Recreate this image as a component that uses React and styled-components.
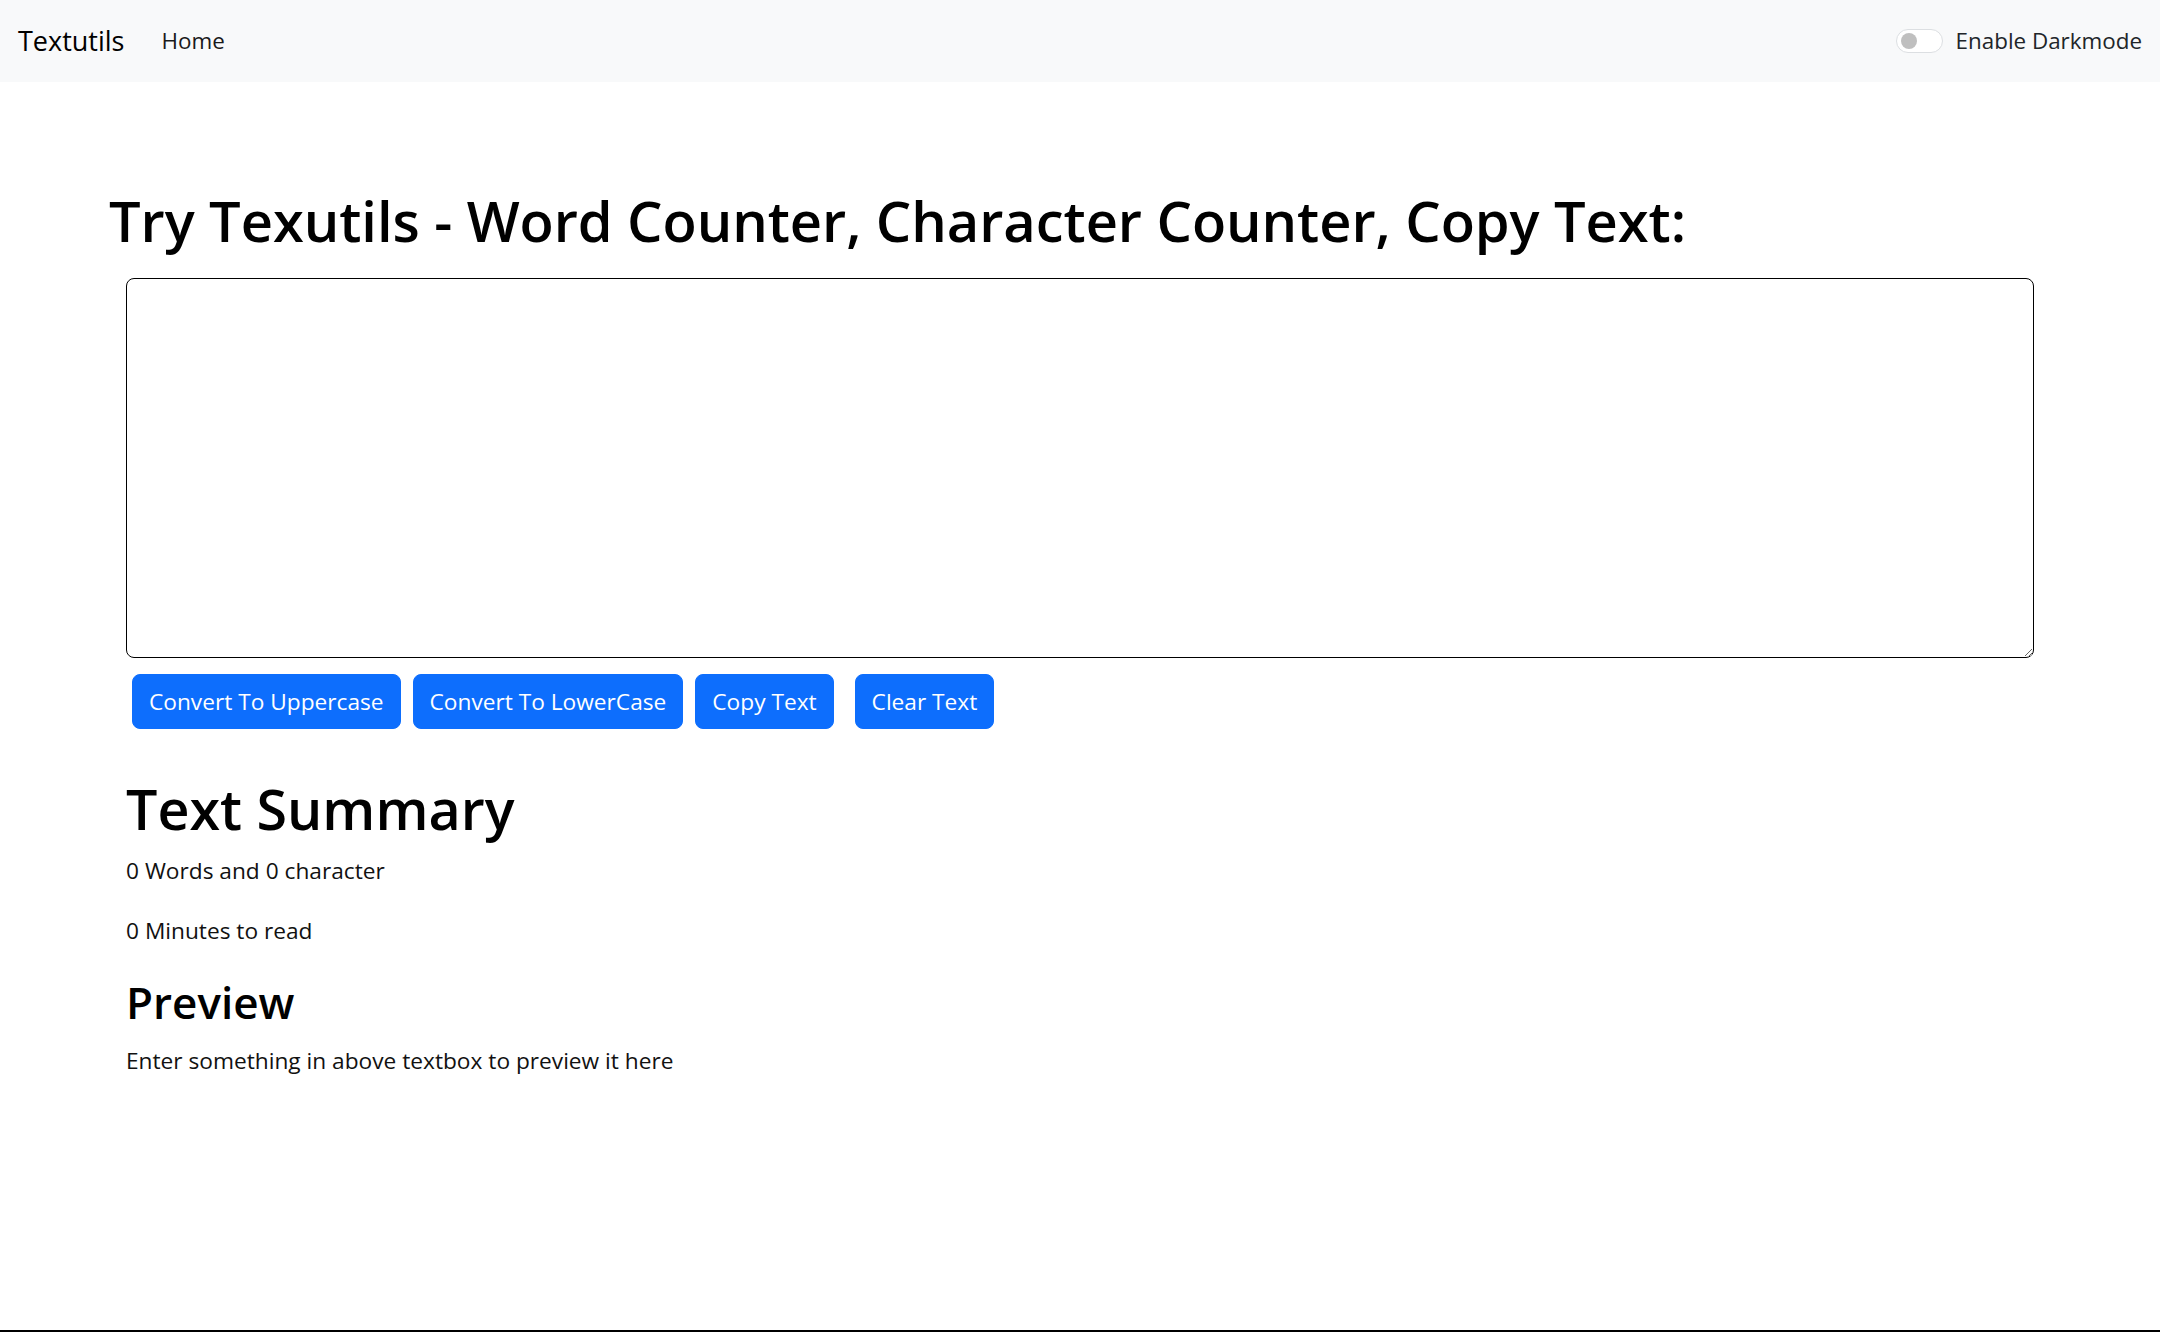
import React, { useState } from "react";
import styled, { createGlobalStyle } from "styled-components";

const Global = createGlobalStyle`
  html, body { margin: 0; padding: 0; background: #fff; }
  body {
    font-family: "Open Sans", "Noto Sans", "Liberation Sans", sans-serif;
    color: #212529;
    font-size: 22.7px;
    line-height: 1.5;
  }
  * { box-sizing: border-box; }
`;

const Shell = styled.div`
  min-height: 100vh;
  display: flex;
  flex-direction: column;
`;

const Navbar = styled.nav`
  height: 82px;
  background: #f8f9fa;
  display: flex;
  align-items: center;
  padding: 0 18px;
`;

const Brand = styled.a`
  font-size: 27px;
  color: #000;
  text-decoration: none;
  margin-right: 37px;
  line-height: 1.5;
`;

const NavLink = styled.a`
  font-size: 22.4px;
  color: #1a1a1a;
  text-decoration: none;
`;

const Spacer = styled.div`
  flex: 1;
`;

const SwitchWrap = styled.label`
  display: flex;
  align-items: center;
  gap: 13px;
  font-size: 22.4px;
  color: #212529;
  cursor: pointer;
`;

const SwitchTrack = styled.span`
  width: 47px;
  height: 24px;
  border-radius: 12px;
  border: 1px solid #dcdfe2;
  background: ${(p) => (p.$on ? "#0d6efd" : "#fff")};
  display: flex;
  align-items: center;
  justify-content: ${(p) => (p.$on ? "flex-end" : "flex-start")};
  padding: 0 4px;
`;

const SwitchKnob = styled.span`
  width: 16px;
  height: 16px;
  border-radius: 50%;
  background: ${(p) => (p.$on ? "#fff" : "#bfbfbf")};
`;

const Main = styled.main`
  flex: 1;
  padding: 0 109px;
`;

const Title = styled.h1`
  font-size: 56px;
  font-weight: 600;
  line-height: 1.2;
  color: #000;
  margin: 105px 0 24px;
  letter-spacing: -0.05px;
`;

const Inner = styled.div`
  padding: 0 17px;
`;

const TextBox = styled.textarea`
  display: block;
  width: 100%;
  height: 380px;
  border: 1.5px solid #000;
  border-radius: 8px;
  padding: 8px 16px;
  font-family: inherit;
  font-size: 22.7px;
  outline: none;
  resize: vertical;
  background: #fff;
`;

const ButtonRow = styled.div`
  display: flex;
  margin-top: 16px;
`;

const Button = styled.button`
  font-family: inherit;
  font-size: 22.7px;
  line-height: 33px;
  color: #fff;
  background: #0d6efd;
  border: 1px solid #0d6efd;
  border-radius: 8px;
  padding: 10px 16px;
  margin: 0 ${(p) => p.$mr || 6}px 0 ${(p) => p.$ml || 6}px;
  cursor: pointer;
`;

const SectionTitle = styled.h1`
  font-size: 55.6px;
  font-weight: 600;
  line-height: 1.2;
  color: #000;
  margin: 47px 0 11px;
`;

const SubTitle = styled.h2`
  font-size: 44px;
  font-weight: 600;
  line-height: 1.2;
  color: #000;
  margin: 28px 0 15px;
`;

const Para = styled.p`
  margin: 0 0 ${(p) => p.$mb ?? 26}px;
  color: #111;
`;

const BottomLine = styled.div`
  height: 2px;
  background: #000;
`;

export default function App() {
  const [text, setText] = useState("");
  const [dark, setDark] = useState(false);
  const words = text.split(/\s+/).filter((w) => w.length).length;
  return (
    <Shell>
      <Global />
      <Navbar>
        <Brand href="#">Textutils</Brand>
        <NavLink href="#">Home</NavLink>
        <Spacer />
        <SwitchWrap onClick={() => setDark(!dark)}>
          <SwitchTrack $on={dark}>
            <SwitchKnob $on={dark} />
          </SwitchTrack>
          Enable Darkmode
        </SwitchWrap>
      </Navbar>
      <Main>
        <Title>Try Texutils - Word Counter, Character Counter, Copy Text:</Title>
        <Inner>
          <TextBox value={text} onChange={(e) => setText(e.target.value)} />
          <ButtonRow>
            <Button onClick={() => setText(text.toUpperCase())}>Convert To Uppercase</Button>
            <Button onClick={() => setText(text.toLowerCase())}>Convert To LowerCase</Button>
            <Button onClick={() => navigator.clipboard && navigator.clipboard.writeText(text)}>Copy Text</Button>
            <Button $ml={15} onClick={() => setText("")}>Clear Text</Button>
          </ButtonRow>
          <SectionTitle>Text Summary</SectionTitle>
          <Para>{words} Words and {text.length} character</Para>
          <Para $mb={0}>{0.008 * words} Minutes to read</Para>
          <SubTitle>Preview</SubTitle>
          <Para>{text.length > 0 ? text : "Enter something in above textbox to preview it here"}</Para>
        </Inner>
      </Main>
      <BottomLine />
    </Shell>
  );
}
